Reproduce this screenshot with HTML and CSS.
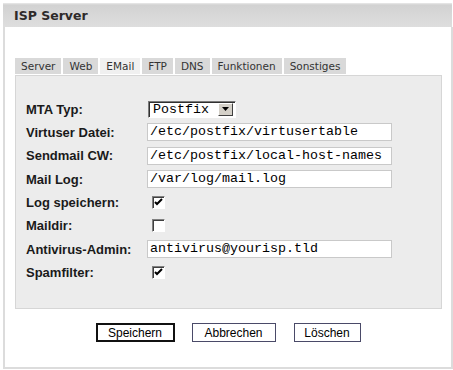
FILE: index.html
```html
<!DOCTYPE html>
<html lang="de">
<head>
  <meta charset="UTF-8">
  <title>ISP Server</title>
  <link rel="stylesheet" href="styles.css">
</head>
<body>
  <div class="window">
    <div class="window-header">ISP Server</div>

    <div class="window-body">
      <ul class="tabs">
        <li class="tab">Server</li>
        <li class="tab">Web</li>
        <li class="tab active">EMail</li>
        <li class="tab">FTP</li>
        <li class="tab">DNS</li>
        <li class="tab">Funktionen</li>
        <li class="tab">Sonstiges</li>
      </ul>

      <div class="panel">
        <div class="form-grid">
          <label class="field-label">MTA Typ:</label>
          <div class="field">
            <div class="select">
              <span class="select-value">Postfix</span>
              <span class="select-button">
                <svg width="7" height="4" viewBox="0 0 7 4"><path d="M0 0h7L3.5 4z" fill="#000"/></svg>
              </span>
            </div>
          </div>

          <label class="field-label">Virtuser Datei:</label>
          <div class="field"><div class="text-input">/etc/postfix/virtusertable</div></div>

          <label class="field-label">Sendmail CW:</label>
          <div class="field"><div class="text-input">/etc/postfix/local-host-names</div></div>

          <label class="field-label">Mail Log:</label>
          <div class="field"><div class="text-input">/var/log/mail.log</div></div>

          <label class="field-label">Log speichern:</label>
          <div class="field">
            <span class="checkbox">
              <svg width="9" height="9" viewBox="0 0 9 9"><path d="M1 4l2 2 5-5" stroke="#000" stroke-width="2" fill="none"/></svg>
            </span>
          </div>

          <label class="field-label">Maildir:</label>
          <div class="field"><span class="checkbox"></span></div>

          <label class="field-label">Antivirus-Admin:</label>
          <div class="field"><div class="text-input">antivirus@yourisp.tld</div></div>

          <label class="field-label">Spamfilter:</label>
          <div class="field">
            <span class="checkbox">
              <svg width="9" height="9" viewBox="0 0 9 9"><path d="M1 4l2 2 5-5" stroke="#000" stroke-width="2" fill="none"/></svg>
            </span>
          </div>
        </div>
      </div>

      <div class="actions">
        <button class="btn btn-default">Speichern</button>
        <button class="btn btn-cancel">Abbrechen</button>
        <button class="btn btn-delete">Löschen</button>
      </div>
    </div>
  </div>
</body>
</html>
```

FILE: styles.css
```css
* {
  box-sizing: border-box;
  margin: 0;
  padding: 0;
}

body {
  background: #fff;
  padding: 3px;
  font-family: 'DejaVu Sans', Verdana, sans-serif;
  color: #222;
}

.window {
  width: 450px;
  height: 366px;
  border: 2px solid #dcdcdc;
  border-top: none;
  display: flex;
  flex-direction: column;
}

.window-header {
  height: 24px;
  margin: 0 -2px;
  padding: 5px 0 0 11px;
  background: linear-gradient(#eaeaea 0, #d2d2d2 2px, #dedede 100%);
  font-size: 12.5px;
  font-weight: bold;
  color: #2e2a2a;
  border-right: 1px solid #fff;
}

.window-body {
  padding: 31px 9px 0 10px;
}

/* tab strip */
.tabs {
  list-style: none;
  display: flex;
  gap: 2px;
  height: 16px;
}

.tab {
  background: #d9d9d9;
  color: #333;
  font-size: 10.5px;
  line-height: 16px;
  padding: 0 6px;
}

.tab.active {
  background: #f0f0f0;
}

.panel {
  margin-top: 1px;
  background: #ececec;
  border: 1px solid #d6d6d6;
  height: 234px;
  padding: 24px 0 0 10px;
}

.form-grid {
  display: grid;
  grid-template-columns: 121px 245px;
  grid-auto-rows: 18px;
  row-gap: 5.4px;
  align-items: center;
}

.field-label {
  font-family: 'Liberation Sans', Arial, sans-serif;
  font-weight: bold;
  font-size: 13px;
  color: #1a1a1a;
}

.field {
  display: flex;
  align-items: center;
  height: 18px;
}

.text-input {
  width: 245px;
  height: 18px;
  background: #fff;
  border: 1px solid #c9c9c9;
  padding: 0 2px;
  font-family: 'Liberation Mono', 'Courier New', monospace;
  font-size: 13.33px;
  line-height: 16px;
  color: #000;
}

.select {
  margin-left: 1px;
  width: 88px;
  height: 17px;
  display: flex;
  align-items: center;
  background: #fff;
  border: 1px solid;
  border-color: #7a7a7a #fff #fff #7a7a7a;
  box-shadow: inset 1px 1px 0 #303030;
}

.select-value {
  flex: 1;
  padding-left: 4px;
  font-family: 'Liberation Mono', 'Courier New', monospace;
  font-size: 13.33px;
  line-height: 15px;
  color: #000;
}

.select-button {
  width: 15px;
  height: 13px;
  margin-right: 2px;
  display: flex;
  align-items: center;
  justify-content: center;
  background: #d4d0c8;
  border: 1px solid;
  border-color: #fff #404040 #404040 #fff;
}

.checkbox {
  margin-left: 5px;
  width: 13px;
  height: 13px;
  display: flex;
  align-items: center;
  justify-content: center;
  background: #fff;
  border: 1px solid;
  border-color: #808080 #fff #fff #808080;
  box-shadow: inset 1px 1px 0 #404040;
}

/* buttons */
.actions {
  display: flex;
  justify-content: center;
  gap: 17px;
  margin-top: 14px;
  padding-right: 1px;
}

.btn {
  height: 19px;
  background: #fff;
  border: 1px solid #4a4a68;
  font-family: 'Liberation Sans', Arial, sans-serif;
  font-size: 12px;
  color: #000;
}

.btn-default {
  border: 2px solid #111;
  width: 79px;
}

.btn-cancel {
  width: 84px;
}

.btn-delete {
  width: 67px;
  margin-left: 1px;
}
```
